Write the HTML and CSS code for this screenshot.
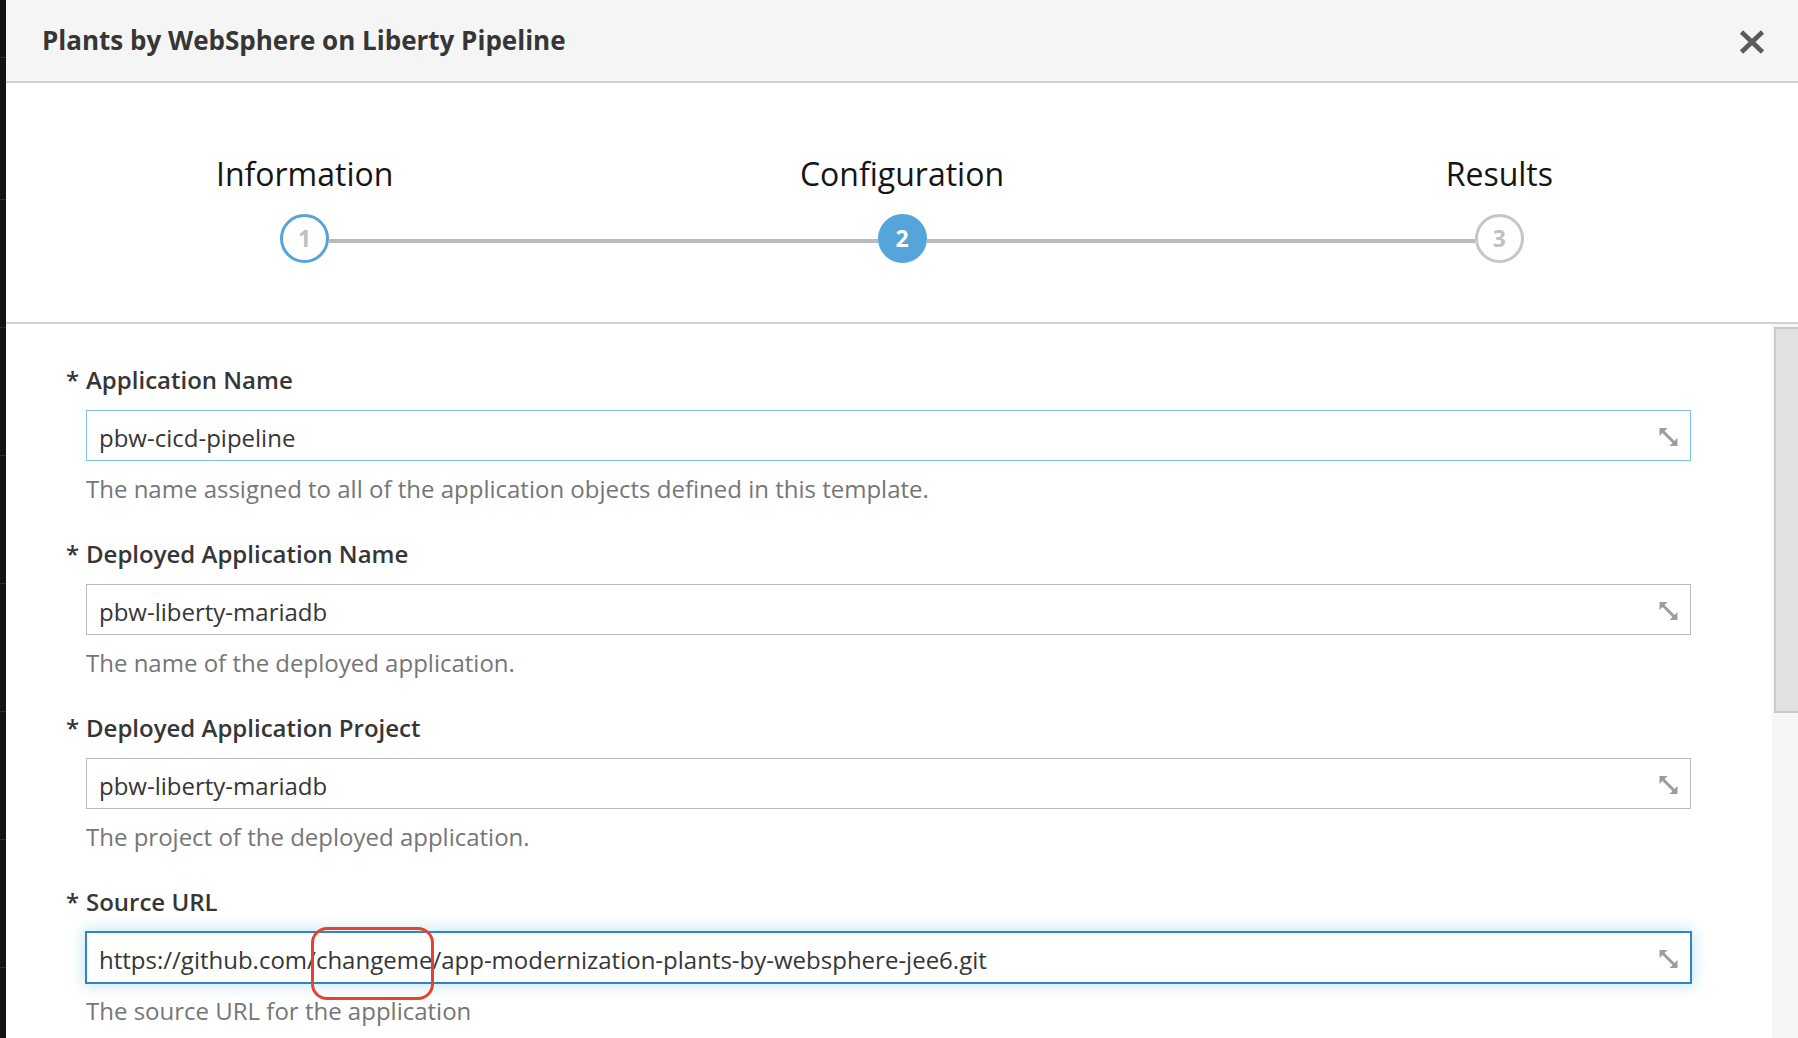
FILE: index.html
```html
<!DOCTYPE html>
<html lang="en">
<head>
<meta charset="utf-8">
<title>Plants by WebSphere on Liberty Pipeline</title>
<link rel="stylesheet" href="styles.css">
</head>
<body>
<div class="page">
  <div class="backdrop-strip"></div>
  <div class="modal">
    <header class="modal-header">
      <h1 class="modal-title">Plants by WebSphere on Liberty Pipeline</h1>
      <button class="close" type="button" aria-label="Close">
        <svg width="26" height="24" viewBox="0 0 26 24"><path d="M2.5 2L23.5 22M23.5 2L2.5 22" stroke="#5b5b5b" stroke-width="4.6" fill="none"/></svg>
      </button>
    </header>

    <section class="wizard-steps">
      <div class="step">
        <div class="step-label">Information</div>
        <div class="step-track">
          <span class="seg seg-none"></span>
          <span class="circle circle-done">1</span>
          <span class="seg"></span>
        </div>
      </div>
      <div class="step">
        <div class="step-label">Configuration</div>
        <div class="step-track">
          <span class="seg"></span>
          <span class="circle circle-active">2</span>
          <span class="seg"></span>
        </div>
      </div>
      <div class="step">
        <div class="step-label">Results</div>
        <div class="step-track">
          <span class="seg"></span>
          <span class="circle circle-todo">3</span>
          <span class="seg seg-none"></span>
        </div>
      </div>
    </section>

    <div class="modal-body">
      <form class="form">
        <div class="field">
          <label class="field-label"><span class="req">*</span>Application Name</label>
          <div class="input input-hover"><span class="value">pbw-cicd-pipeline</span><svg class="resize" width="21" height="20" viewBox="0 0 20 20"><path d="M1 1h8L1 9z M19 19h-8l8-8z" fill="#9d9d9d"/><path d="M4 4L16 16" stroke="#9d9d9d" stroke-width="3"/></svg></div>
          <div class="help">The name assigned to all of the application objects defined in this template.</div>
        </div>
        <div class="field">
          <label class="field-label"><span class="req">*</span>Deployed Application Name</label>
          <div class="input"><span class="value">pbw-liberty-mariadb</span><svg class="resize" width="21" height="20" viewBox="0 0 20 20"><path d="M1 1h8L1 9z M19 19h-8l8-8z" fill="#9d9d9d"/><path d="M4 4L16 16" stroke="#9d9d9d" stroke-width="3"/></svg></div>
          <div class="help">The name of the deployed application.</div>
        </div>
        <div class="field">
          <label class="field-label"><span class="req">*</span>Deployed Application Project</label>
          <div class="input"><span class="value">pbw-liberty-mariadb</span><svg class="resize" width="21" height="20" viewBox="0 0 20 20"><path d="M1 1h8L1 9z M19 19h-8l8-8z" fill="#9d9d9d"/><path d="M4 4L16 16" stroke="#9d9d9d" stroke-width="3"/></svg></div>
          <div class="help">The project of the deployed application.</div>
        </div>
        <div class="field">
          <label class="field-label"><span class="req">*</span>Source URL</label>
          <div class="input input-focus"><span class="value">https://github.com/<span class="annot">changeme</span>/app-modernization-plants-by-websphere-jee6.git</span><svg class="resize" width="21" height="20" viewBox="0 0 20 20"><path d="M1 1h8L1 9z M19 19h-8l8-8z" fill="#9d9d9d"/><path d="M4 4L16 16" stroke="#9d9d9d" stroke-width="3"/></svg></div>
          <div class="help">The source URL for the application</div>
        </div>
      </form>
      <div class="scrollbar"><div class="thumb"></div></div>
    </div>
  </div>
</div>
</body>
</html>
```

FILE: styles.css
```css
html, body {
  margin: 0;
  padding: 0;
  height: 100%;
  overflow: hidden;
  background: #fff;
  font-family: "Open Sans", "Noto Sans", "Liberation Sans", sans-serif;
}

.page {
  display: flex;
  height: 1038px;
}

.backdrop-strip {
  flex: none;
  width: 6px;
  background-color: #111214;
  background-image: repeating-linear-gradient(180deg, #111214 0 127px, #2c2d30 127px 128px);
  background-position: 0 72px;
}

.modal {
  flex: 1;
  min-width: 0;
  display: flex;
  flex-direction: column;
  background: #fff;
}

.modal-header {
  flex: none;
  height: 81px;
  background: #f5f5f5;
  border-bottom: 2px solid #d1d1d1;
  display: flex;
  align-items: center;
  justify-content: space-between;
  padding: 0 33px 0 36px;
}

.modal-title {
  margin: 0 0 2px;
  font-size: 26px;
  font-weight: 700;
  color: #363636;
  line-height: 34px;
}

.close {
  border: 0;
  background: transparent;
  padding: 0;
  margin-top: 2px;
  width: 26px;
  height: 24px;
  display: flex;
}

.wizard-steps {
  flex: none;
  height: 168px;
  padding-top: 71px;
  border-bottom: 2px solid #d1d1d1;
  display: flex;
}

.step {
  flex: 1;
  display: flex;
  flex-direction: column;
}

.step-label {
  text-align: center;
  font-size: 32px;
  line-height: 40px;
  color: #151515;
}

.step-track {
  margin-top: 20px;
  display: flex;
  align-items: center;
}

.seg {
  flex: 1;
  height: 4px;
  margin-top: 5px;
  background: #bbbbbb;
}

.seg-none {
  background: transparent;
}

.circle {
  flex: none;
  width: 49px;
  height: 49px;
  box-sizing: border-box;
  border-radius: 50%;
  border: 3px solid #53a4d9;
  display: flex;
  align-items: center;
  justify-content: center;
  font-size: 23px;
  font-weight: 700;
  line-height: 1;
}

.circle-done {
  background: #fff;
  color: #c0c0c0;
}

.circle-active {
  background: #55a5da;
  border-color: #55a5da;
  color: #fff;
}

.circle-todo {
  background: #fff;
  border-color: #c6c6c6;
  color: #c0c0c0;
}

.modal-body {
  flex: 1;
  min-height: 0;
  display: flex;
}

.form {
  flex: 1;
  min-width: 0;
  padding: 41px 81px 0 80px;
}

.field-label {
  display: block;
  margin: 0 0 15px;
  font-size: 24px;
  line-height: 30px;
  font-weight: 600;
  color: #363636;
}

.req {
  display: inline-block;
  width: 20px;
  margin-left: -20px;
}

.input {
  height: 51px;
  box-sizing: border-box;
  border: 1px solid #bbbbbb;
  background: #fff;
  display: flex;
  align-items: center;
  justify-content: space-between;
  padding: 3px 11px 0 12px;
  font-size: 24px;
  color: #363636;
}

.input-hover {
  border-color: #7fc1e7;
}

.input-focus {
  border-color: #2f85c8;
  box-shadow: 0 0 0 1px #2f85c8, 0 0 14px 3px rgba(0, 136, 206, 0.22);
}

.value {
  white-space: nowrap;
}

.annot {
  position: relative;
}

.annot::after {
  content: "";
  position: absolute;
  left: -5px;
  right: -2px;
  top: -16px;
  bottom: -24px;
  border: 3px solid #e5432f;
  border-radius: 16px;
}

.resize {
  flex: none;
  margin-top: -1px;
}

.help {
  margin: 13px 0 35px;
  font-size: 24px;
  line-height: 30px;
  color: #767676;
}

.scrollbar {
  flex: none;
  width: 26px;
  background: #f6f6f6;
}

.thumb {
  margin: 3px 0 0 2px;
  height: 382px;
  background: #e1e1e1;
  border: 2px solid #c9c9c9;
  border-right: 0;
}
```
